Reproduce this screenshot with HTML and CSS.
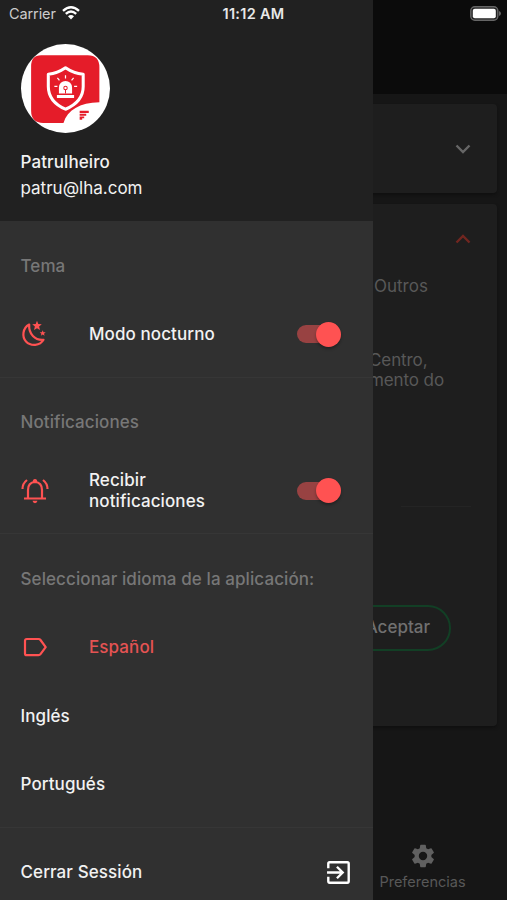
FILE: index.html
```html
<!DOCTYPE html>
<html lang="es">
<head>
<meta charset="utf-8">
<title>Patrulheiro</title>
<link rel="stylesheet" href="styles.css">
</head>
<body>
<div class="app">
  <header class="topbar"></header>
  <main class="content">
    <section class="card card-closed">
      <svg class="chevron" viewBox="0 0 16 10"><path d="M1.5 1.5 8 8l6.500-6.500"/></svg>
    </section>
    <section class="card card-open">
      <div class="card-head"><svg class="chevron chevron-up" viewBox="0 0 16 10"><path d="M1.500 8.500 8 2l6.500 6.500"/></svg></div>
      <p class="kind">Outros</p>
      <p class="address">Centro,<br>mento do</p>
      <hr class="card-line">
      <button class="accept"><span>Aceptar</span></button>
    </section>
  </main>
  <nav class="tabs">
    <div class="tab">
      <svg class="gear" viewBox="0 0 24 24"><path d="M19.140 12.940c.04-.3.06-.61.06-.94s-.02-.64-.07-.94l2.030-1.580a.49.49 0 0 0 .12-.61l-1.920-3.320a.49.49 0 0 0-.59-.22l-2.390.96c-.5-.38-1.030-.7-1.620-.94l-.36-2.540a.48.48 0 0 0-.48-.41h-3.840a.47.47 0 0 0-.47.41l-.36 2.540c-.59.24-1.130.57-1.620.94l-2.390-.96a.48.48 0 0 0-.59.22L2.740 8.870a.47.47 0 0 0 .12.61l2.030 1.580c-.05.3-.09.63-.09.94s.02.64.07.94l-2.030 1.580a.49.49 0 0 0-.12.61l1.920 3.320c.12.22.37.29.59.22l2.390-.96c.5.38 1.030.7 1.620.94l.36 2.540c.05.24.24.41.48.41h3.840c.24 0 .44-.17.47-.41l.36-2.540c.59-.24 1.130-.56 1.620-.94l2.390.96c.22.08.47 0 .59-.22l1.920-3.320a.47.47 0 0 0-.12-.61zM12 15.600a3.600 3.600 0 1 1 0-7.200 3.600 3.600 0 0 1 0 7.200z"/></svg>
      <span>Preferencias</span>
    </div>
  </nav>

  <aside class="drawer">
    <div class="profile">
      <svg class="avatar" viewBox="0 0 88 88">
        <circle cx="44" cy="44" r="44" fill="#fff"/>
        <path fill="#e51c29" d="M20 11h46q11.500 0 11.500 12v34.500C58 58 46 65 42 78H22Q10 78 10 66V22Q10 11 20 11z"/>
        <path fill="none" stroke="#fff" stroke-width="3" stroke-linejoin="round" d="M44 23.500q8 5.500 17.500 6.500v12q0 15-17.500 22.500Q27 57 27 42V30q9-1 17-6.500z"/>
        <path fill="#fff" d="M37.500 49v-6a6.500 6.500 0 0 1 13 0v6zM35.500 50.500h17v3h-17z"/>
        <path fill="none" stroke="#fff" stroke-width="1.200" d="M44 31v3M36 33.500l2 2.500M52 33.500 50 36M33 42h3M52.500 42h3"/>
        <circle cx="44" cy="43.500" r="1.700" fill="none" stroke="#e51c29"/>
        <path stroke="#e51c29" d="M44 45v4"/>
        <path fill="#e51c29" d="M58 66h9v2.200h-9zM58 69h6.500v2H58zM58 71.800h4.500v1.700H58zM58 73h2.500v1.800H58z"/>
      </svg>
      <div class="name">Patrulheiro</div>
      <div class="mail">patru@lha.com</div>
    </div>

    <section class="group">
      <h2 class="row">Tema</h2>
      <div class="row">
        <svg class="icon" viewBox="0 0 28 28"><path class="line" d="M8.200 4.500C1.500 8 .8 17 5 21.400c5 5.200 14 4.500 17.500-1.600C14 20.500 7.500 14 8.200 4.500z"/><path class="solid" d="m16 .8 1.300 3.300 3.500.2-2.700 2.300.9 3.500-3-1.900-3 1.900.9-3.500-2.700-2.300 3.500-.2zM21.700 10.200l.8 2 2.200.1-1.700 1.400.6 2.100-1.900-1.200-1.800 1.200.5-2.100-1.700-1.400 2.200-.1z"/></svg>
        <span>Modo nocturno</span>
        <i class="switch"></i>
      </div>
    </section>

    <section class="group">
      <h2 class="row">Notificaciones</h2>
      <div class="row">
        <svg class="icon" viewBox="0 0 28 28"><path class="line" d="M7 21.500V13q0-7.600 7-8 7 .4 7 8v8.500M3 21.500h22M6 3Q1.500 6.500 1.500 12M22 3q4.500 3.500 4.500 9"/><path class="solid" d="M11.700 5.200q0-3.200 2.300-3.200t2.300 3.200zM11.500 23.800h5q-.5 2.400-2.500 2.400t-2.500-2.400z"/></svg>
        <span>Recibir<br>notificaciones</span>
        <i class="switch"></i>
      </div>
    </section>

    <section class="group">
      <h2 class="row">Seleccionar idioma de la aplicación:</h2>
      <div class="row active">
        <svg class="icon" viewBox="0 0 28 28"><path class="line" d="M5.800 6h11.700q1.300 0 2 1l5.200 7.200-5.200 7q-.7 1-2 1H5.800Q4 22.200 4 20.400V7.800Q4 6 5.800 6z"/></svg>
        <span>Español</span>
      </div>
      <div class="row">Inglés</div>
      <div class="row">Portugués</div>
    </section>

    <div class="group logout">
      <div class="row">
        <span>Cerrar Sessión</span>
        <svg class="exit" viewBox="0 0 24 24"><path d="M2.200 8V3.500q0-1.300 1.300-1.300h17q1.300 0 1.300 1.300v17q0 1.300-1.300 1.300h-17q-1.300 0-1.300-1.300V16M1 12h14M10.500 6.500 16 12l-5.500 5.500"/></svg>
      </div>
    </div>
  </aside>

  <div class="status">
    <div class="carrier"><span>Carrier</span>
      <svg class="wifi" viewBox="0 0 18 14"><path d="M1 4.800Q9-2.200 17 4.800M3.800 7.800q5.200-4.500 10.400 0"/><path class="dot" d="M6 10.300q3-2.600 6 0l-3 3.200z"/></svg>
    </div>
    <time>11:12 AM</time>
    <svg class="battery" viewBox="0 0 31 15"><rect x=".8" y=".8" width="27" height="13.400" rx="4" fill="#222" stroke="#666" stroke-width="1.400"/><rect x="2.800" y="2.800" width="23" height="9.400" rx="2" fill="#fff"/><path fill="#666" d="M29 5q2 .8 2 2.500T29 10z"/></svg>
  </div>
</div>
</body>
</html>
```
FILE: styles.css
```css
* { box-sizing: border-box; }
body { margin: 0; background: #161616; }
.app {
  position: relative;
  display: flex;
  flex-direction: column;
  width: 507px;
  height: 900px;
  overflow: hidden;
  background: #161616;
  color: #585858;
  font: 500 17px/20.5px Inter, "Liberation Sans", sans-serif;
}
.topbar { height: 94px; background: #0b0b0b; }
.content { flex: 1; padding: 10px 10px 0; }
.card {
  background: #1e1e1e;
  border-radius: 4px;
  box-shadow: 0 2px 3px #101010;
}
.card-closed {
  height: 89px;
  margin-bottom: 11px;
  padding: 40px 26px 0 0;
  text-align: right;
}
.card-open { height: 522px; padding: 30px 26px 0 363px; }
.card-head { text-align: right; height: 42px; }
.chevron { display: block; width: 16px; height: 10px; margin-left: auto; fill: none; stroke: #666; stroke-width: 2.4; }
.chevron-up { stroke: #712620; }
.kind { margin: 0 0 0 1px; font-weight: 400; }
.address { margin: 53px 0 0 -4px; font-weight: 400; letter-spacing: -.1px; }
.card-line { margin: 115px 0 98px 28px; border: 0; height: 1px; background: #242424; }
.accept {
  display: flex;
  align-items: center;
  justify-content: flex-end;
  width: 142px;
  height: 46px;
  margin-left: -64px;
  padding: 0 19px;
  border: 2px solid #123f25;
  border-radius: 23px;
  background: none;
  color: #707070;
  font: inherit;
}
.tabs { height: 70px; padding-left: 338px; }
.tab { display: flex; flex-direction: column; align-items: center; width: 169px; padding-top: 12px; font-size: 14.500px; font-weight: 400; line-height: 19px; }
.gear { width: 28px; height: 28px; margin-bottom: 2px; fill: #606060; }

.drawer {
  position: absolute;
  top: 0;
  left: 0;
  width: 372.500px;
  height: 900px;
  background: #303030;
  color: #f2f2f2;
  letter-spacing: .09px;
}
.profile { height: 221px; padding: 44px 20.500px 0; background: #212121; }
.avatar { display: block; width: 89px; height: 89px; margin-bottom: 16px; }
.name, .mail { line-height: 26px; }
.mail { font-weight: 400; letter-spacing: 0; }
.group { padding: 10.500px 20.500px 8px; border-bottom: 1px solid #363636; }
.logout { border: 0; }
.row { display: flex; align-items: center; height: 68.500px; margin: 0; }
h2.row { color: #777; font: inherit; }
.icon { width: 28px; height: 28px; margin-right: 40.500px; }
.line { fill: none; stroke: #ff5252; stroke-width: 2.200; stroke-linejoin: round; }
.solid { fill: #ff5252; }
.active { color: #e45353; }
.switch {
  position: relative;
  width: 43px;
  height: 18px;
  margin: 0 12px 0 auto;
  border-radius: 9px;
  background: #984242;
}
.switch::after {
  content: "";
  position: absolute;
  top: -3.500px;
  right: -1px;
  width: 25px;
  height: 25px;
  border-radius: 50%;
  background: #ff5252;
  box-shadow: 0 2px 3px rgba(0, 0, 0, .3);
}
.exit { width: 25px; height: 25px; margin: 0 1px 0 auto; fill: none; stroke: #fff; stroke-width: 2.300; }

.status {
  position: absolute;
  inset: 0 0 auto;
  display: grid;
  grid-template-columns: 1fr auto 1fr;
  align-items: center;
  height: 28px;
  padding: 0 6px 0 9px;
  color: #e8e8e8;
  font-size: 14.500px;
}
.carrier { display: flex; align-items: center; gap: 6px; font-weight: 400; color: #ccc; }
.wifi { width: 18px; height: 14px; margin-bottom: 2px; fill: none; stroke: #fff; stroke-width: 2.400; }
.wifi .dot { fill: #fff; stroke: none; }
.carrier span { letter-spacing: -.1px; }
.status time { margin-right: 3px; font-weight: 600; letter-spacing: .3px; }
.battery { width: 31px; height: 15px; margin-bottom: 1px; justify-self: end; }
```
